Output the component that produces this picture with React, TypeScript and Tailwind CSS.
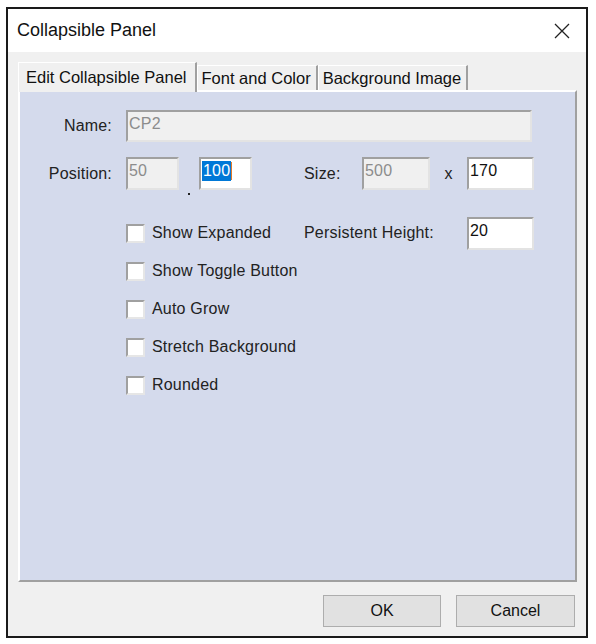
import React from "react";

const font = { fontFamily: '"Liberation Sans", Arial, sans-serif' };

const sunken =
  "border-2 border-t-[#a0a0a0] border-l-[#a0a0a0] border-r-[#e3e3e3] border-b-[#e3e3e3]";

const Field = ({
  value,
  width,
  height = "h-[33px]",
  disabled = false,
  selected = false,
}: {
  value: string;
  width: string;
  height?: string;
  disabled?: boolean;
  selected?: boolean;
}) => (
  <div
    className={[
      width,
      height,
      sunken,
      "pl-[1px] pt-[2px] text-[16px] leading-[20px]",
      disabled ? "bg-[#f0f0f0] text-[#8c8c8c]" : "bg-white text-[#111]",
    ].join(" ")}
  >
    {selected ? (
      <span className="inline-flex items-center">
        <span className="bg-[#0078d7] text-white px-[1px]">{value}</span>
        <span className="w-[1px] h-[18px] bg-[#e07a2a]" />
      </span>
    ) : (
      value
    )}
  </div>
);

const CheckRow = ({ label }: { label: string }) => (
  <div className="flex items-center h-[38px]">
    <div className="w-[19px] h-[19px] bg-white border-2 border-t-[#a0a0a0] border-l-[#a0a0a0] border-r-[#e6e6e6] border-b-[#e6e6e6]" />
    <span className="ml-[7px] text-[16px] tracking-[0.2px] text-[#222]">{label}</span>
  </div>
);

const Tab = ({ label, active = false }: { label: string; active?: boolean }) => (
  <div
    className={[
      "flex items-center bg-[#f0f0f0] border-l border-t border-white border-r-2 border-r-[#a0a0a0] text-[16.5px] text-[#111]",
      active
        ? "h-[30px] -mb-[2px] relative z-10 pl-[7px] pr-[8px]"
        : "h-[25px] pl-[4px] pr-[5px]",
    ].join(" ")}
  >
    {label}
  </div>
);

export default function App() {
  return (
    <div className="w-[596px] h-[644px] bg-white pt-[7px] pl-[6px]" style={font}>
      <div className="w-[582px] h-[631px] border-2 border-[#1a1a1a] bg-[#f0f0f0] flex flex-col">
        <header className="h-[43px] bg-white flex items-center justify-between pl-[9px] pr-[16px]">
          <span className="text-[18px] text-[#111]">Collapsible Panel</span>
          <svg width="16" height="16" viewBox="0 0 16 16" className="text-[#222]">
            <path d="M1 1 L15 15 M15 1 L1 15" stroke="currentColor" strokeWidth="1.3" fill="none" />
          </svg>
        </header>

        <div className="mt-[10px] ml-[10px] flex items-end h-[28px]">
          <Tab label="Edit Collapsible Panel" active />
          <Tab label="Font and Color" />
          <Tab label="Background Image" />
        </div>

        <section className="ml-[10px] mr-[9px] h-[492px] bg-[#d4daec] border-2 border-t-white border-l-white border-r-[#a0a0a0] border-b-[#a0a0a0] pt-[18px] text-[#222] tracking-[0.2px]">
          <div className="flex items-center h-[32px]">
            <span className="w-[92px] text-right text-[16px]">Name:</span>
            <div className="ml-[14px]">
              <Field value="CP2" width="w-[406px]" height="h-[32px]" disabled />
            </div>
          </div>

          <div className="flex items-center h-[33px] mt-[15px]">
            <span className="w-[92px] text-right text-[16px]">Position:</span>
            <div className="ml-[14px]">
              <Field value="50" width="w-[53px]" disabled />
            </div>
            <div className="w-[20px] h-[33px] flex justify-center items-end">
              <div className="w-[2px] h-[2px] bg-[#222] -mb-[5px]" />
            </div>
            <Field value="100" width="w-[53px]" selected />
            <span className="ml-[52px] w-[58px] text-[16px]">Size:</span>
            <Field value="500" width="w-[68px]" disabled />
            <span className="w-[37px] text-center text-[16px]">x</span>
            <Field value="170" width="w-[67px]" />
          </div>

          <div className="flex mt-[24px]">
            <div className="ml-[106px] w-[178px] flex flex-col">
              <CheckRow label="Show Expanded" />
              <CheckRow label="Show Toggle Button" />
              <CheckRow label="Auto Grow" />
              <CheckRow label="Stretch Background" />
              <CheckRow label="Rounded" />
            </div>
            <div className="flex items-center h-[38px] self-start">
              <span className="w-[163px] text-[16px]">Persistent Height:</span>
              <Field value="20" width="w-[67px]" />
            </div>
          </div>
        </section>

        <footer className="flex justify-end gap-[15px] pr-[11px] pt-[13px]">
          <button className="w-[118px] h-[32px] bg-[#e1e1e1] border border-[#adadad] text-[16px] text-[#111]">
            OK
          </button>
          <button className="w-[119px] h-[32px] bg-[#e1e1e1] border border-[#adadad] text-[16px] text-[#111]">
            Cancel
          </button>
        </footer>
      </div>
    </div>
  );
}
